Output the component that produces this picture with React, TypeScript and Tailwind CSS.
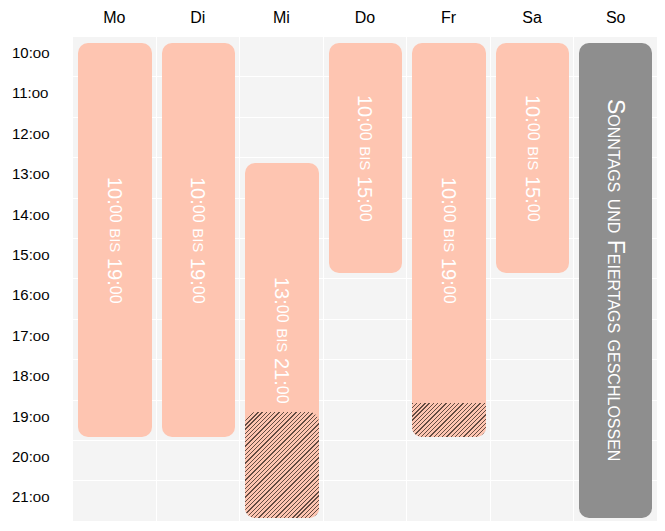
import React from "react";

const days = ["Mo", "Di", "Mi", "Do", "Fr", "Sa", "So"];
const hours = [10, 11, 12, 13, 14, 15, 16, 17, 18, 19, 20, 21];

const hatch =
  "bg-[#fec5b1] bg-[repeating-linear-gradient(135deg,rgba(60,45,38,0.8)_0_0.9px,transparent_0.9px_3px)]";

const Range = ({ from, to }: { from: string; to: string }) => (
  <span className="[writing-mode:vertical-rl] text-white text-[20px] leading-none whitespace-nowrap">
    {from}:<span className="text-[16px]">00</span>{" "}
    <span className="text-[15px]">BIS</span> {to}:
    <span className="text-[16px]">00</span>
  </span>
);

const App = () => {
  return (
    <div className="w-[665px] h-[531px] bg-white font-['Liberation_Sans',Arial,sans-serif] text-black">
      <div className="grid w-[657px] grid-cols-[72px_repeat(7,1fr)] grid-rows-[36px_repeat(12,39.4px)] gap-px">
        {/* header */}
        {days.map((d, i) => (
          <div
            key={d}
            style={{ gridColumn: i + 2, gridRow: 1 }}
            className="flex items-center justify-center text-[16px]"
          >
            {d}
          </div>
        ))}

        {/* time labels + background cells */}
        {hours.map((h, r) => (
          <React.Fragment key={h}>
            <div
              style={{ gridColumn: 1, gridRow: r + 2 }}
              className="pl-3 pt-[7px] text-[15px] leading-[18px]"
            >
              {h}:
              <span className="inline-block scale-y-[0.7] origin-[50%_78%]">00</span>
            </div>
            {days.map((d, c) => (
              <div
                key={d}
                style={{ gridColumn: c + 2, gridRow: r + 2 }}
                className="bg-[#f4f4f4]"
              />
            ))}
          </React.Fragment>
        ))}

        {/* Mo */}
        <div className="col-start-2 row-start-2 row-span-10 ml-[5px] mr-[4px] mt-[6px] mb-[3px] rounded-[10px] bg-[#fec5b1] flex items-center justify-center">
          <Range from="10" to="19" />
        </div>
        {/* Di */}
        <div className="col-start-3 row-start-2 row-span-10 ml-[5px] mr-[4px] mt-[6px] mb-[3px] rounded-[10px] bg-[#fec5b1] flex items-center justify-center">
          <Range from="10" to="19" />
        </div>
        {/* Mi */}
        <div className="relative col-start-4 row-start-5 row-span-9 ml-[5px] mr-[4px] mt-[5px] mb-[3px] rounded-[10px] bg-[#fec5b1] flex items-center justify-center">
          <Range from="13" to="21" />
          <div className={`absolute left-0 right-0 bottom-0 h-[106px] rounded-[10px] ${hatch}`} />
        </div>
        {/* Do */}
        <div className="col-start-5 row-start-2 row-span-6 ml-[5px] mr-[4px] mt-[6px] mb-[5px] rounded-[10px] bg-[#fec5b1] flex items-center justify-center">
          <Range from="10" to="15" />
        </div>
        {/* Fr */}
        <div className="relative col-start-6 row-start-2 row-span-10 ml-[5px] mr-[4px] mt-[6px] mb-[3px] rounded-[10px] bg-[#fec5b1] flex items-center justify-center">
          <Range from="10" to="19" />
          <div className={`absolute left-0 right-0 bottom-0 h-[34px] rounded-b-[10px] ${hatch}`} />
        </div>
        {/* Sa */}
        <div className="col-start-7 row-start-2 row-span-6 ml-[5px] mr-[4px] mt-[6px] mb-[5px] rounded-[10px] bg-[#fec5b1] flex items-center justify-center">
          <Range from="10" to="15" />
        </div>
        {/* So */}
        <div className="col-start-8 row-start-2 row-span-12 ml-[5px] mr-[5px] mt-[6px] mb-[3px] rounded-[10px] bg-[#8e8e8e] flex items-center justify-center">
          <span className="[writing-mode:vertical-rl] [font-variant-caps:small-caps] text-white text-[23px] leading-none whitespace-nowrap">
            Sonntags und Feiertags geschlossen
          </span>
        </div>
      </div>
    </div>
  );
};

export default App;
